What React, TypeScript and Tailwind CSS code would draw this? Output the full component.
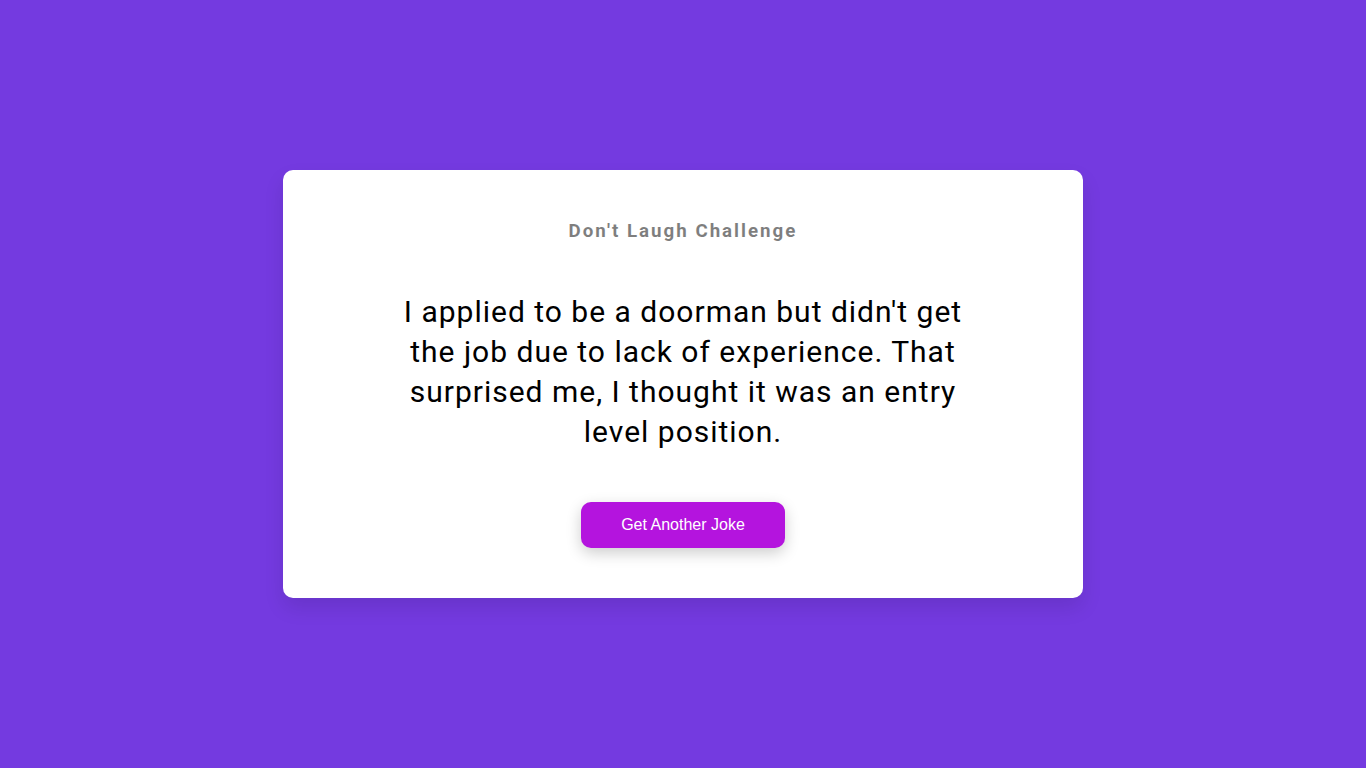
export default function App() {
  return (
    <div className="min-h-screen w-full flex items-center justify-center bg-[#743ae0] font-['Roboto',sans-serif] overflow-hidden">
      <div className="w-[800px] bg-white rounded-[10px] shadow-[0_10px_20px_rgba(0,0,0,0.1)] px-5 py-[50px] text-center">
        <h3 className="m-0 text-[18.72px] leading-[22px] font-bold tracking-[2px] opacity-50 text-black">Don't Laugh Challenge</h3>
        <div className="text-[30px] leading-[40px] tracking-[1px] my-[50px] mx-auto max-w-[600px] text-black">
          I applied to be a doorman but didn't get the job due to lack of experience. That surprised me, I thought it was an entry level position.
        </div>
        <button className="bg-[#b414de] text-white border-0 rounded-[10px] shadow-[0_5px_15px_rgba(0,0,0,0.2)] px-10 py-[14px] text-[16px] leading-[18px] font-['Liberation_Sans',Arial,sans-serif]">
          Get Another Joke
        </button>
      </div>
    </div>
  );
}
